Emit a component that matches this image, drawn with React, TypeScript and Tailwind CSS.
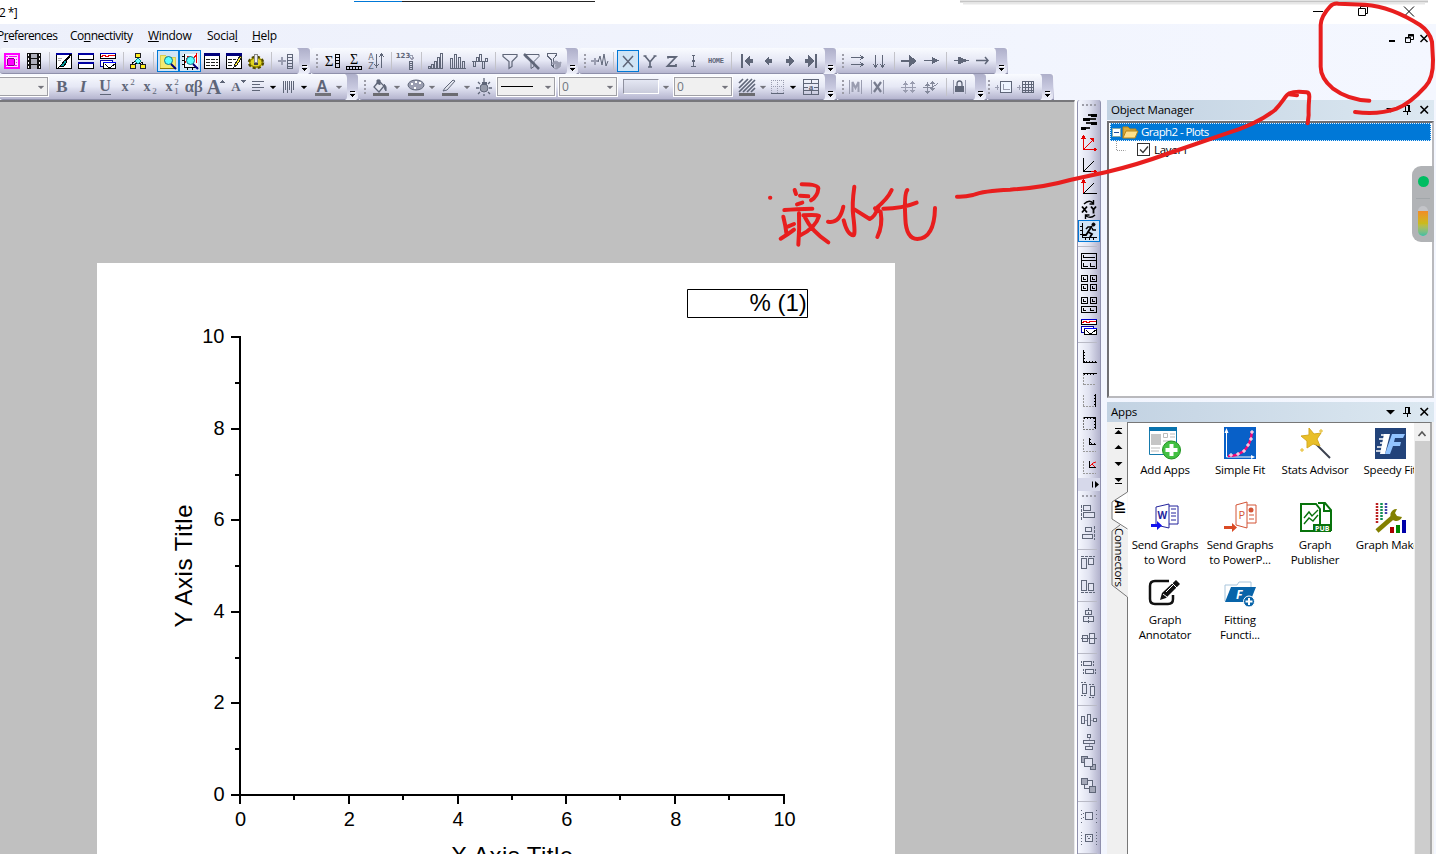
import React from "react";

type Kids = { children?: React.ReactNode };
const G = "#5f6678";
const L = "#9a9db0";
const serif = "Liberation Serif";

function Ic({ children, on, w = 22 }: Kids & { on?: boolean; w?: number }) {
  return (
    <div className={on ? "h-[22px] shrink-0 bg-[#cfe4f5] outline outline-1 -outline-offset-1 outline-[#0078d7]" : "h-[22px] shrink-0"}>
      <svg className="block" width={w} height="22" viewBox={`0 0 ${w} 22`} fill="none" stroke={G} shapeRendering="crispEdges">
        {children}
      </svg>
    </div>
  );
}
const Sep = () => (
  <div className="flex h-[18px] w-2 shrink-0 justify-center">
    <div className="w-px bg-[#c3c3c9]" />
  </div>
);
const HSep = () => (
  <div className="flex h-2 w-[22px] shrink-0 items-center">
    <div className="h-px w-[19px] bg-[#b9bac6]" />
  </div>
);
const Grip = () => (
  <div className="flex w-[10px] shrink-0 flex-col items-center gap-[2px] pl-px">
    <i className="size-[2px] bg-[#9d9da8]" />
    <i className="size-[2px] bg-[#9d9da8]" />
    <i className="size-[2px] bg-[#9d9da8]" />
    <i className="size-[2px] bg-[#9d9da8]" />
  </div>
);
const HGrip = () => (
  <div className="flex h-[10px] shrink-0 items-center justify-center gap-[2px]">
    <i className="size-[2px] bg-[#9d9da8]" />
    <i className="size-[2px] bg-[#9d9da8]" />
    <i className="size-[2px] bg-[#9d9da8]" />
    <i className="size-[2px] bg-[#9d9da8]" />
  </div>
);
const More = () => (
  <svg className="block shrink-0" width="14" height="26" viewBox="0 0 14 26">
    <defs>
      <linearGradient id="more" x1="0" y1="0" x2="0" y2="1">
        <stop offset="0" stopColor="#aeafca" />
        <stop offset=".55" stopColor="#c9cae0" />
        <stop offset="1" stopColor="#f0f2fc" />
      </linearGradient>
    </defs>
    <path d="M0 0h10q3 0 3 3v20q0 2-2 3H0q2-1 2-3V4q0-3-2-4z" fill="url(#more)" />
    <g shapeRendering="crispEdges">
      <path d="M6 18.500h5" stroke="#fff" />
      <path d="M5 17.500h5" stroke="#000" />
      <path d="M4.500 20h6l-3 3z" fill="#000" />
    </g>
    <path d="M8 23.500l3-3" stroke="#fff" fill="none" />
  </svg>
);
const Dd = ({ dark, w = 12 }: { dark?: boolean; w?: number }) => (
  <svg className="block shrink-0" width={w} height="22" viewBox={`0 0 ${w} 22`}>
    <path d={`M${Math.floor(w / 2) - 3} 10h6l-3 3z`} fill={dark ? "#000" : "#75757d"} stroke={dark ? "#000" : "#75757d"} strokeWidth=".2" />
  </svg>
);
const Bar = ({ children }: Kids) => (
  <div className="flex h-[26px] shrink-0 items-center rounded-l-[3px] border-b border-[#8f90ab] bg-gradient-to-b from-[#f9fbff] via-[#e6e8f5] to-[#b5b5cf]">
    {children}
  </div>
);
const Combo = ({ children }: Kids) => (
  <div className="flex h-[19px] w-[58px] shrink-0 items-center border border-[#a0a0a6] bg-[#f0f0f0] pl-[2px] font-['Open_Sans',sans-serif] text-[12px] text-[#707680] shadow-[0_0_0_1px_#fff]">
    <div className="w-[42px]">{children}</div>
    <Dd w={12} />
  </div>
);

const Mag = () => (
  <>
    <circle cx="11.500" cy="10.500" r="4" fill="#5ff" stroke="#178" shapeRendering="auto" />
    <path d="M14 14l5 5" stroke="#00007c" strokeWidth="2" shapeRendering="auto" />
  </>
);
const Win = ({ x, y, w, h }: { x: number; y: number; w: number; h: number }) => (
  <>
    <rect x={x + 0.5} y={y + 0.5} width={w - 1} height={h - 1} fill="#fff" stroke="#000" />
    <path d={`M${x} ${y + 1}h${w}`} stroke="#0000a0" strokeWidth="2" />
  </>
);
const WaveWin = () => (
  <>
    <rect x="3.500" y="3.500" width="15" height="5" fill="#fff" stroke="#000" />
    <path d="M3 3.500h16" stroke="#00c" />
    <path d="M4 7l3-2 3 2 3-2 2 1 3-1" stroke="#e00" />
    <rect x="3.500" y="10.500" width="12" height="6" fill="#fff" stroke="#00a" />
    <rect x="6.500" y="12.500" width="12" height="6" fill="#fff" stroke="#000" />
    <path d="M6 12.500h13" stroke="#00f" />
    <path d="M8 14l3 3h3l4-3" stroke="#000" />
  </>
);
const Plain = ({ t, x = 11, y = 16, s = 17, c = G, b = true, i = false, f = serif }: { t: string; x?: number; y?: number; s?: number; c?: string; b?: boolean; i?: boolean; f?: string }) => (
  <text x={x} y={y} fontSize={s} fill={c} stroke="none" textAnchor="middle" fontWeight={b ? 700 : 400} fontStyle={i ? "italic" : "normal"} fontFamily={f}>
    {t}
  </text>
);

function RowOne() {
  return (
    <div className="flex h-[26px] shrink-0">
      <Bar>
        <div className="w-px" />
        <Ic>
          <rect x="4" y="4" width="14" height="14" fill="#ffd8ff" stroke="#f0f" strokeWidth="2" />
          <path d="M5 6.500h2M8 6.500h8M15.500 9v1M15.500 12v1M5 15.500h11" stroke="#f0f" />
          <circle cx="10" cy="12" r="4" fill="#f0f" stroke="#808" />
        </Ic>
        <Ic>
          <path d="M4 3h14v16H4z" fill="#111" stroke="none" />
          <path d="M8 4h6v4H8zM8 9h6v5H8zM8 15h6v4H8z" fill="#aeb0bb" stroke="none" />
          <path d="M5.500 4v15M16.500 4v15" stroke="#fff" strokeDasharray="2 2" />
        </Ic>
        <Sep />
        <Ic>
          <Win x={3} y={3} w={16} h={16} />
          <path d="M18 4l-7 9" stroke="#000" strokeWidth="2" />
          <path d="M12 10l-3 4-3 3 5-1 3-4z" fill="#099" stroke="#000" />
          <path d="M5 8h4M5 10h3" stroke="#aaa" />
        </Ic>
        <Ic>
          <Win x={3} y={3} w={16} h={7} />
          <Win x={3} y={12} w={16} h={7} />
        </Ic>
        <Ic><WaveWin /></Ic>
        <Sep />
        <Ic>
          <path d="M11 7v3M5.500 16v-3l5-3 5 3v3M8 10l6 4M14 10l-6 4" stroke="#000" />
          <path d="M11 8l3 3-3 3-3-3z" fill="#6ff" stroke="#088" />
          <path d="M8.500 3.500h5v4h-5zM3.500 14.500h5v4h-5zM13.500 14.500h5v4h-5z" fill="#ffee20" stroke="#222" />
        </Ic>
        <Sep />
        <Ic on>
          <path d="M3 5h5l2 2h8v11H3z" fill="#f4ea70" stroke="#d8cc50" />
          <path d="M3 18.500h15" stroke="#8b7a00" /><Mag />
        </Ic>
        <Ic on>
          <path d="M4 4h15v14H4z" fill="#f4f8ff" stroke="none" />
          <path d="M5.500 4v13.500h13M3 6.500h2M3 10.500h2M3 14.500h2M8.500 18v2M13.500 18v2" stroke="#000" />
          <path d="M6 13l3-7h2l2 5 4-6v8" stroke="#e00" /><Mag />
        </Ic>
        <Ic>
          <rect x="3.500" y="3.500" width="15" height="15" fill="#fff" stroke="#000" /><path d="M3 4.500h16" stroke="#00007c" strokeWidth="3" />
          <path d="M5 9.500h12M5 12.500h12M5 15.500h12" stroke="#222" strokeDasharray="4 1" />
        </Ic>
        <Ic>
          <rect x="3.500" y="3.500" width="15" height="15" fill="#fff" stroke="#000" /><path d="M3 4.500h16" stroke="#00007c" strokeWidth="3" />
          <path d="M5 9.500h8M5 12.500h5M5 15.500h5" stroke="#222" strokeDasharray="4 1" />
          <path d="M17 6l-5 8-1 3 3-2 5-8z" fill="#fe3" stroke="#222" />
        </Ic>
        <Ic>
          <g shapeRendering="auto">
            <ellipse cx="11" cy="12.500" rx="7" ry="5.500" fill="#d7c800" stroke="#4f4700" strokeWidth="2.500" strokeDasharray="3 2" />
            <ellipse cx="11" cy="12.500" rx="6" ry="4.500" fill="#e0d420" stroke="#7a7000" />
          </g>
          <path d="M9.500 4.500h3v8h-3z" fill="#eee" stroke="#888" /><path d="M9 14h4" stroke="#444" strokeWidth="2" />
        </Ic>
        <Sep />
        <Ic>
          <path d="M7 7v8M3 11h8" stroke={L} strokeWidth="2" />
          <path d="M12.500 4.500h5v14h-5zM13 7.500h5M13 10.500h5M13 13.500h5M13 16.500h5" />
        </Ic>
        <More />
      </Bar>
      <Bar>
        <Grip />
        <Ic><Plain t="Σ" x={8} y={16} s={15} c="#000" b={false} /><path d="M14.500 4.500h4v13h-4zM14 7.500h4M14 10.500h4M14 13.500h4" stroke="#000" /></Ic>
        <Ic>
          <Plain t="Σ" y={14} s={14} c="#000" b={false} /><path d="M3 16.500h16M3 19.500h16M3.500 16v4M6.500 17v3M9.500 17v3M12.500 17v3M15.500 17v3M18.500 16v4" stroke="#000" />
        </Ic>
        <Ic>
          <Plain t="A" x={6} y={10} s={8} b={false} f="DejaVu Sans" /><Plain t="Z" x={6} y={19} s={8} b={false} f="DejaVu Sans" />
          <path d="M11.500 4v13M9.500 14l2 3 2-3M16.500 18V4M14 7l2.500-3L19 7" />
        </Ic>
        <Sep />
        <Ic>
          <Plain t="123" x={8} y={8} s={7} f="DejaVu Sans" /><path d="M14 5.500h3v4M15 7l2 3 2-3" stroke={L} />
          <path d="M14.500 11.500h3v8h-3zM14 13.500h4M14 15.500h4M14 17.500h4" />
        </Ic>
        <Sep />
        <Ic><path d="M3 18.500h15M3.500 18v-2h2v2M6.500 18v-4h2v4M9.500 18v-7h2v7M12.500 18V7.500h2V18M15.500 18V3.500h2V18" /></Ic>
        <Ic><path d="M3 18.500h16M3.500 18V8.500h2V18M7.500 18V4.500h2V18M11.500 18V7.500h2V18M15.500 18v-7h2v7" /></Ic>
        <Ic><path d="M3 11.500h16M4.500 11v5h2v-5M7.500 11V7h2v4M10.500 11V4.500h2V11M13.500 11v7h2v-7M16.500 11V8h2v3" /></Ic>
        <Sep />
        <Ic><path d="M4 4.500h14v2l-5 5v5l-3 2v-7L4 6.500z" shapeRendering="auto" strokeWidth="1.200" /></Ic>
        <Ic><path d="M4 4.500h14v2l-5 5v5l-3 2v-7L4 6.500z" shapeRendering="auto" /><path d="M3 4l15 15" strokeWidth="2.500" shapeRendering="auto" /></Ic>
        <Ic><path d="M4 3.500h9v2l-3 4v7l-2-2v-5l-4-4z" /><path d="M9 14c1-3 5-4 7-1l2-1-1 5-5-1 2-1M17 16c-2 4-5 3-6 2" stroke={L} fill={L} shapeRendering="auto" /></Ic>
        <More />
      </Bar>
      <Bar>
        <Grip />
        <Ic w={20}><path d="M6 8v7M2 11h8" stroke={L} strokeWidth="2" /><path d="M9 12l2-6 2 9 2-11 2 12 2-5" shapeRendering="auto" /></Ic>
        <Sep />
        <Ic on><path d="M6 6l10 11M16 6L6 17" shapeRendering="auto" strokeWidth="1.500" /></Ic>
        <Ic><path d="M6 6l5 6 5-6M11 12v5M4.500 6h3M14.500 6h3M9 17h4" strokeWidth="1.700" shapeRendering="auto" /></Ic>
        <Ic><path d="M7 8.500V7h8l-8.500 9H15v-2" strokeWidth="1.800" shapeRendering="auto" /></Ic>
        <Ic><path d="M10.500 5v12M9 5.500h3M8 16.500h5M9 11.500h3M9 10.500h3" /></Ic>
        <Ic><text x="3" y="13" fontSize="7" fontWeight="700" fontFamily="Liberation Mono" fill={G} stroke="none" textLength="16">HOME</text></Ic>
        <Sep />
        <Ic><path d="M7 4v14" strokeWidth="2" /><path d="M9 11l6-6v4h3v4h-3v4z" fill={G} stroke="none" /></Ic>
        <Ic><path d="M7 11l5-5v3h3v4h-3v3z" fill={G} stroke="none" /></Ic>
        <Ic><path d="M15 11l-5-5v3H7v4h3v3z" fill={G} stroke="none" /></Ic>
        <Ic><path d="M15 4v14" strokeWidth="2" /><path d="M13 11L7 5v4H4v4h3v4z" fill={G} stroke="none" /></Ic>
        <More />
      </Bar>
      <Bar>
        <Grip />
        <Ic w={21}><path d="M4 7.500h12M4 14.500h12M13 5l3 2.500-3 2.500M13 12l3 2.500-3 2.500" /></Ic>
        <Ic><path d="M7.500 5v12M14.500 5v12M5 14l2.500 3 2.500-3M12 14l2.500 3 2.500-3" /></Ic>
        <Sep />
        <Ic><path d="M3 11h9" strokeWidth="2" /><path d="M11 5l8 6-8 6z" fill={G} stroke="none" /></Ic>
        <Ic><path d="M4 10.500h10" /><path d="M12 7l7 3.500-7 3.500z" fill={G} stroke="none" /></Ic>
        <Sep />
        <Ic><path d="M4 10.500h15" /><path d="M8 6.500l10 4L8 14.500z" fill={G} stroke="none" /></Ic>
        <Ic><path d="M4 10.500h12M13 7l3 3.500-3 3.500" strokeWidth="1.500" shapeRendering="auto" /></Ic>
        <More />
      </Bar>
    </div>
  );
}

function RowTwo() {
  return (
    <div className="flex h-[26px] shrink-0">
      <Bar>
        <div className="-ml-[10px] mr-[3px]"><Combo /></div>
        <Ic><Plain t="B" /></Ic>
        <Ic><Plain t="I" x={10} i /></Ic>
        <Ic><Plain t="U" x={10} y={15} s={16} /><path d="M5 18.500h11" /></Ic>
        <Ic><Plain t="x" x={8} y={15} s={14} /><Plain t="2" x={15.500} y={9} s={9} b={false} /></Ic>
        <Ic><Plain t="x" x={8} y={15} s={14} /><Plain t="2" x={15.500} y={18} s={9} b={false} /></Ic>
        <Ic><Plain t="x" x={8} y={15} s={14} /><Plain t="2" x={15.500} y={9} s={9} b={false} /><Plain t="1" x={15.500} y={18} s={9} b={false} /></Ic>
        <Ic><Plain t="αβ" x={10.500} s={17} b={false} /><Plain t="αβ" x={11} s={17} b={false} /></Ic>
        <Ic><Plain t="A" x={9} y={18} s={20} /><path d="M15 7h5l-2.500-3z" fill={G} stroke="none" /></Ic>
        <Ic><Plain t="A" x={9} y={15} s={13} /><path d="M14 4h5l-2.500 3z" fill={G} stroke="none" /></Ic>
        <Ic w={18}><path d="M3 5.500h12M3 8.500h8M3 11.500h12M3 14.500h8" /></Ic>
        <Dd dark />
        <Ic w={19}><path d="M4.500 5v12M6.500 5v9M8.500 5v12M10.500 5v9M12.500 5v12M14.500 5v9" /></Ic>
        <Dd dark />
        <Ic w={23}><Plain t="A" x={12} y={16} s={16} f="Liberation Sans" /><path d="M5 17h16v3H5z" fill="#727278" stroke="none" /></Ic>
        <Dd />
        <More />
      </Bar>
      <Bar>
        <Grip />
        <Ic w={22}>
          <path d="M9 4l6 6-5 6-5-5 5-6" fill="#e4e6f0" strokeWidth="1.300" shapeRendering="auto" /><path d="M8 8V4h3v5M15 8q3 2 2 7-2-2-2-5" fill={G} shapeRendering="auto" />
          <path d="M4 17h16v3H4z" fill="#6b6b70" stroke="none" />
        </Ic>
        <Dd />
        <Ic w={24}><ellipse cx="13" cy="9" rx="8" ry="5" fill={L} shapeRendering="auto" /><path d="M8 8h2M12 6h2M16 7h2M11 12h2" stroke="#fff" strokeWidth="2" /><path d="M5 17h16v3H5z" fill="#6b6b70" stroke="none" /></Ic>
        <Dd w={11} />
        <Ic w={24}><path d="M5 15l2-3 8-8 2 1-8 9z" fill="#e4e6f0" shapeRendering="auto" /><path d="M4 17h16v3H4z" fill="#6b6b70" stroke="none" /></Ic>
        <Dd w={11} />
        <Ic w={22}><path d="M11 2v4M5 6l2 2M17 6l-2 2M3 12h3M16 12h3M5 18l2-2M17 18l-2-2M11 18v2" strokeWidth="1.300" shapeRendering="auto" /><circle cx="11" cy="12" r="4" fill="#969baa" shapeRendering="auto" /><path d="M9 6h4v2H9z" fill={G} /></Ic>
        <div className="w-[2px]" />
        <Combo><div className="ml-px h-px w-8 bg-black" /></Combo>
        <div className="w-1" />
        <Combo>0</Combo>
        <div className="w-[6px]" />
        <div className="h-[15px] w-9 border border-[#8f919f] border-r-white border-b-white bg-gradient-to-b from-[#e4e7f3] to-[#c9cbdb]" />
        <Dd w={15} />
        <Combo>0</Combo>
        <div className="w-1" />
        <Ic w={22}><path d="M3 7l4-4M3 12l9-9M3 16L16 3M7 16L19 4M11 16l8-8M15 16l4-4" strokeWidth="1.700" shapeRendering="auto" /><path d="M3 17h16v3H3z" fill="#6b6b70" stroke="none" /></Ic>
        <Dd w={10} />
        <Ic w={19}><path d="M3 4.500h13M3 10.500h13M3.500 4v13M9.500 4v13M15.500 4v13" stroke={L} strokeDasharray="1 1" /><path d="M3 17.500h13" /></Ic>
        <Dd dark />
        <Ic w={24}><path d="M4.500 3.500h15v15h-15zM4 7.500h16M4 14.500h16M12 3v5M12 14v5" /><Plain t="a" x={12} y={14} s={9} /><path d="M5 11.500h4M15 11.500h4" /></Ic>
        <More />
      </Bar>
      <Bar>
        <Grip />
        <Ic><path d="M2.500 4v14M14.500 4v14" stroke={L} /><path d="M5.500 16V6l3 6 3-6v10" strokeWidth="2" stroke={L} shapeRendering="auto" /></Ic>
        <Ic><path d="M2.500 4v14M14.500 4v14" stroke={L} /><path d="M5 6l7 10M12 6L5 16" strokeWidth="2.200" shapeRendering="auto" stroke="#777c8e" /></Ic>
        <div className="w-[7px]" />
        <Ic><path d="M7.500 5v12M3 11.500h15M14.500 5v12" stroke={L} /><path d="M5 9l2.500-3L10 9zM5 14l2.500 3 2.500-3zM12 8l2.500-3L17 8zM12 14l2.500 3 2.500-3z" fill={L} stroke="none" /></Ic>
        <Ic><path d="M7.500 6v12M3 11.500h9l6-4M12.500 5v9" stroke="#858a9c" /><path d="M5 10l2.500-3 2.500 3zM5 15l2.500 3 2.500-3zM10 8l2.500-3L15 8zM10 12l2.500 3 2.500-3z" fill="#858a9c" stroke="none" /></Ic>
        <Sep />
        <Ic w={23}><path d="M3.500 4v14M15.500 4v14" stroke={L} /><path d="M7 11V8q0-3 2.500-3T12 8v3" shapeRendering="auto" strokeWidth="1.300" /><rect x="5.500" y="10.500" width="8" height="5" fill={G} /></Ic>
        <More />
      </Bar>
      <Bar>
        <div className="-ml-1"><Grip /></div>
        <Ic><path d="M2 11.500h4M4 9v5" stroke={L} /><path d="M7.500 5.500h11v11h-11z" fill="#eef4ff" strokeWidth="1.200" /><path d="M10.500 8v5.500h6" stroke={L} /></Ic>
        <Ic w={25}><path d="M2 11.500h4M4 9v5" stroke={L} /><path d="M7.500 5.500h11v11h-11zM7 8.500h12M7 11.500h12M7 14.500h12M10.500 5v12M13.500 5v12M16.500 5v12" /></Ic>
        <More />
      </Bar>
    </div>
  );
}

const Mini = ({ x, y, w = 7 }: { x: number; y: number; w?: number }) => (
  <>
    <path d={`M${x + 0.5} ${y + 0.5}h${w - 1}v6h-${w - 1}z`} stroke="#000" />
    <path d={`M${x + 2.5} ${y + 2}v2.500h2.500`} stroke="#000" />
  </>
);
const Box = ({ d }: { d: string }) => <path d={d} fill="#e3e5f2" />;

function SideTools() {
  return (
    <div className="flex h-[754px] w-6 shrink-0 flex-col items-center overflow-hidden rounded-t-[3px] border-r border-l border-[#8f90ad] bg-gradient-to-r from-[#f6f8ff] via-[#e0e2f0] to-[#b2b2cc]">
      <HGrip />
      <Ic><path d="M13 5h6M5 9h7M13 13h6M3 18h5" stroke="#000" strokeWidth="3" /><path d="M10 5h3M12 9h6M8 13h5M8 18h4" stroke="#222" strokeWidth="2" /></Ic>
      <Ic><g stroke="#e60000" fill="none"><path d="M5.500 4v13.500H18M6 17l9-9" /><path d="M3 6.500h5l-2.500-4zM15.500 15v5l4-2.500zM11 6h5v5z" fill="#e60000" stroke="none" /></g></Ic>
      <Ic><path d="M5.500 4v13.500H15M6 17L16 7" stroke="#000" /><path d="M13 17.500h3" stroke="#e60000" /><path d="M15.500 15v5l4-2.500z" fill="#e60000" stroke="none" /></Ic>
      <Ic><path d="M6 17L16 7M5 17.500h14" stroke="#000" /><path d="M5.500 5v12" stroke="#e60000" /><path d="M3 6.500h5l-2.500-4z" fill="#e60000" stroke="none" /></Ic>
      <Ic><g shapeRendering="auto" stroke="#000"><path d="M4 8.500l5 6M9 8.500l-5 6M13 8.500l2.500 3 2.500-3M15.500 11.500v4" strokeWidth="1.800" /><path d="M6 6q5-5 9-1M15.500 2v4h-4M17 17q-4 4-9 1M7.500 21v-4h4" strokeWidth="1.400" /></g></Ic>
      <Ic on>
        <path d="M4.500 3v14.500H19M2 6h2M2 10h2M2 14h2M7 18v2M11 18v2M15 18v2" stroke="#000" />
        <g shapeRendering="auto" stroke="#000"><path d="M14 6l-4 6 4 2-2 3M10 12l-2 3H5" strokeWidth="1.800" /><path d="M14 7H10L8 9M14 8l1 2h3" strokeWidth="1.500" /><circle cx="15.500" cy="4.500" r="1.500" fill="#000" /></g>
      </Ic>
      <HSep />
      <Ic><path d="M3.500 3.500h15v15h-15zM3 10.500h16M5.500 5v2.500h11M5.500 13v3.500h4M12.500 13v3.500h4" stroke="#000" /></Ic>
      <Ic><Mini x={3} y={3} /><Mini x={12} y={3} /><Mini x={3} y={12} /><Mini x={12} y={12} /></Ic>
      <Ic><Mini x={3} y={3} /><Mini x={12} y={3} /><Mini x={3} y={12} w={16} /><path d="M12.500 14v2.500h3" stroke="#000" /></Ic>
      <Ic><WaveWin /></Ic>
      <HSep />
      <Ic><path d="M5.500 4v12.500h13" stroke="#000" /><path d="M6.500 6v10M8 15.500h11" stroke="#000" strokeDasharray="1 2" /></Ic>
      <Ic><path d="M5.500 6v11M6 16.500h12" stroke="#999" strokeDasharray="2 1" /><path d="M5 5.500h14" stroke="#000" /><path d="M6 6.500h12" stroke="#000" strokeDasharray="1 2" /></Ic>
      <Ic><path d="M5.500 5v11M5 16.500h12" stroke="#999" strokeDasharray="2 1" /><path d="M17.500 4v13" stroke="#000" /><path d="M16.500 5v12" stroke="#000" strokeDasharray="1 2" /></Ic>
      <Ic><path d="M5 5.500h13M17.500 5v12" stroke="#000" /><path d="M6 6.500h12M16.500 6v11" stroke="#000" strokeDasharray="1 2" /><path d="M5.500 5v12M5 17.500h12" stroke="#777" strokeDasharray="2 1" /></Ic>
      <Ic><path d="M5.500 5v12M5 17.500h13" stroke="#999" strokeDasharray="2 1" /><path d="M11.500 4v6.500H18" stroke="#000" /><path d="M12.500 5v6M13 9.500h5" stroke="#000" strokeDasharray="1 2" /></Ic>
      <Ic><path d="M5.500 5v12M5 17.500h13" stroke="#999" strokeDasharray="2 1" /><path d="M11.500 5v6.500H18" stroke="#000" /><path d="M12 10l3-3 3-1M14 8l3 3" stroke="#e00" shapeRendering="auto" /></Ic>
      <svg className="block shrink-0" width="24" height="13" viewBox="0 0 24 13"><path d="M0 0h24v13H0z" fill="#d6d8ea" /><path d="M15.500 3.500v6" stroke="#000" /><path d="M18 3l4 3.500-4 3.500z" fill="#000" /></svg>
      <HGrip />
      <Ic><path d="M3.500 4v15" strokeDasharray="3 1" /><Box d="M5.500 4.500h7v5h-7zM5.500 11.500h11v5h-11z" /></Ic>
      <Ic><path d="M16.500 3v14" strokeDasharray="3 1" /><Box d="M7.500 4.500h6v4h-6zM4.500 11.500h10v4h-10z" /></Ic>
      <HSep />
      <Ic><path d="M3 3.500h14" strokeDasharray="3 1" /><Box d="M3.500 5.500h5v10h-5zM10.500 5.500h5v6h-5z" /></Ic>
      <Ic><path d="M3 17.500h14" strokeDasharray="3 1" /><Box d="M3.500 5.500h5v10h-5zM10.500 8.500h5v7h-5z" /></Ic>
      <HSep />
      <Ic><Box d="M7.500 5.500h6v4h-6zM5.500 11.500h10v5h-10z" /><path d="M10.500 3v16" strokeDasharray="3 1" /></Ic>
      <Ic><Box d="M4.500 8.500h5v6h-5zM11.500 6.500h5v10h-5z" /><path d="M3 11.500h16" /></Ic>
      <HSep />
      <Ic><path d="M3.500 4v6M15.500 4v6M5.500 12v6M17.500 12v6" strokeDasharray="2 1" /><Box d="M5.500 4.500h8v4h-8zM7.500 12.500h8v4h-8z" /></Ic>
      <Ic><path d="M3 3.500h6M3 16.500h6M11 5.500h6M11 18.500h6" strokeDasharray="2 1" /><Box d="M4.500 5.500h4v9h-4zM12.500 7.500h4v9h-4z" /></Ic>
      <HSep />
      <Ic><path d="M3 11.500h15" stroke={L} /><Box d="M3.500 7.500h3v7h-3zM9.500 5.500h3v11h-3zM15.500 9.500h3v3h-3z" /></Ic>
      <Ic><path d="M11 3v16" stroke={L} /><Box d="M9.500 3.500h3v3h-3zM5.500 9.500h11v3h-11zM7.500 15.500h7v3h-7z" /></Ic>
      <Ic><path d="M3.500 3.500h6v6h-6zM12.500 11.500h5v5h-5z" fill="#a4a8b8" /><Box d="M6.500 5.500h8v8h-8z" /></Ic>
      <Ic><Box d="M6.500 5.500h8v8h-8z" /><path d="M3.500 3.500h6v6h-6zM11.500 11.500h6v6h-6z" fill="#a4a8b8" /></Ic>
      <HSep />
      <Ic><Box d="M7.500 7.500h7v7h-7z" /><path d="M3.500 5v13M18.500 5v13M5.500 8v8" strokeDasharray="1 3" /></Ic>
      <Ic><Box d="M7.500 7.500h7v7h-7z" /><path d="M3.500 5v13M18.500 5v13M9 9l4 4M13 9l-4 4" strokeDasharray="1 2" /></Ic>
      <HSep />
    </div>
  );
}

function Graph() {
  const n = [0, 1, 2, 3, 4, 5];
  const minor = [0, 1, 2, 3, 4];
  return (
    <div className="mt-[161px] ml-[97px] h-[591px] w-[798px] bg-white">
      <svg className="block overflow-hidden" width="798" height="591" viewBox="97 263 798 591" fontFamily="Liberation Sans" fontSize="20">
        <g stroke="#000" strokeWidth="2" shapeRendering="crispEdges">
          <path d="M240 336v468M231 795h554" />
          {n.map((i) => <path key={i} d={`M231 ${Math.round(337 + i * 91.6)}h9M${Math.round(240 + i * 108.8)} 795v9`} />)}
          {minor.map((i) => <path key={i} d={`M235 ${Math.round(383 + i * 91.6)}h5M${Math.round(294 + i * 108.8)} 795v5`} />)}
        </g>
        {n.map((i) => <text key={i} x="224.500" y={343 + i * 91.6} textAnchor="end">{10 - 2 * i}</text>)}
        {n.map((i) => <text key={i} x={240.500 + i * 108.8} y="826" textAnchor="middle">{2 * i}</text>)}
        <text transform="translate(192 627.500) rotate(-90)" fontSize="24" textLength="123">Y Axis Title</text>
        <text x="451" y="864" fontSize="24" textLength="122">X Axis Title</text>
        <path d="M687.500 289.500h120v28h-120z" fill="none" stroke="#000" />
        <text x="749.500" y="311" fontSize="24">% (1)</text>
      </svg>
    </div>
  );
}

const PanelHead = ({ title }: { title: string }) => (
  <div className="flex h-5 shrink-0 items-center justify-between bg-gradient-to-r from-[#c2d2e2] to-[#dce8f1] pl-1">
    <span className="tracking-[-0.2px]">{title}</span>
    <svg width="52" height="20" viewBox="0 0 52 20" stroke="#000" fill="none">
      <path d="M4 8h9l-4.500 4.500z" fill="#000" stroke="none" />
      <path d="M23.500 11V5.500h4V11M21 11.500h8M25.500 12v3M26.500 6v5" shapeRendering="crispEdges" />
      <path d="M38.500 6l7.500 7.500M46 6l-7.500 7.500" strokeWidth="1.600" />
    </svg>
  </div>
);

const App1 = ({ label, children }: Kids & { label: string[] }) => (
  <div className="flex h-[75px] w-[75px] shrink-0 flex-col items-center">
    <svg className="-ml-px block shrink-0" width="34" height="36" viewBox="0 0 34 36" fill="none">{children}</svg>
    <div className="flex flex-col items-center pt-px pr-px leading-[15px] tracking-[-0.2px] whitespace-nowrap">
      {label.map((t) => <span key={t}>{t}</span>)}
    </div>
  </div>
);

function Panels() {
  return (
    <div className="flex h-[754px] w-[327px] shrink-0 flex-col text-[11.500px]">
      <PanelHead title="Object Manager" />
      <div className="mt-px h-[277px] shrink-0 border-2 border-[#6f6f73] border-r-[#b9b9bd] border-b-[#b9b9bd] bg-white">
        <div className="mx-px flex h-[18px] items-center border border-dotted border-[#e0f0ff] bg-[#0078d7] text-white">
          <svg className="-ml-px" width="30" height="16" viewBox="0 0 30 16" fill="none">
            <rect x="2.500" y="4.500" width="8" height="8" fill="#fff" stroke="#8aa" /><path d="M4 8.500h5" stroke="#224d9a" />
            <path d="M13 14V3h5l2 2h6v3" fill="#d9aa3b" stroke="#b98516" /><path d="M13 14l3-7h12l-3 7z" fill="#ffe08a" stroke="#b98516" />
          </svg>
          <span className="pb-px pl-px tracking-[-0.6px]">Graph2 - Plots</span>
        </div>
        <div className="flex h-[18px] items-center">
          <svg width="44" height="18" viewBox="0 0 44 18" fill="none">
            <path d="M7.500 0v9.500h9" stroke="#999" strokeDasharray="1 1" /><rect x="28.500" y="2.500" width="12" height="12" stroke="#333" /><path d="M31 8.500l3 3 5-6" stroke="#333" strokeWidth="1.300" />
          </svg>
          <span className="pb-px pl-px tracking-[-0.3px]">Layer1</span>
        </div>
      </div>
      <div className="mt-1 flex shrink-0 flex-col"><PanelHead title="Apps" /></div>
      <div className="flex h-[432px] shrink-0 bg-[#f0f0f0]">
        <div className="h-[432px] w-[21px] shrink-0">
          <svg className="block" width="21" height="432" viewBox="1107 422 21 432" fill="none">
            <path d="M1127.500 492l-15.500 10v17l8 6 8 6z" fill="#fff" stroke="none" />
            <path d="M1127.500 422v70l-15.500 10v17l15.500 10M1120 525l-8 6v54l15.500 12v257" stroke="#777" />
            <path d="M1115 428.500h7M1115 483.500h7" stroke="#000" />
            <path d="M1114.500 434l4-4 4 4zM1114.500 449l4-4 4 4zM1114.500 462h8l-4 4zM1114.500 478h8l-4 4z" fill="#000" />
            <text transform="translate(1114.500 500) rotate(90)" fontFamily="Open Sans" fontWeight="700" fontSize="11.500" fill="#000" textLength="14">All</text>
            <text transform="translate(1114.500 528) rotate(90)" fontFamily="Open Sans" fontSize="11.500" fill="#000" textLength="59">Connectors</text>
          </svg>
        </div>
        <div className="h-[432px] w-[286px] shrink-0 overflow-hidden border-t border-[#777] bg-white pt-[2px]">
          <div className="flex w-[300px] flex-wrap">
            <App1 label={["Add Apps"]}>
              <path d="M1.500 3.500h27v26h-27z" fill="#fff" stroke="#167aac" /><path d="M1 2h28v4H1z" fill="#0873ae" />
              <path d="M3 9h10v11H3z" fill="#c5c5c5" /><path d="M15.500 8.500h4v4h-4zM22 9h5M22 12h5M15 16h8M3 23h9M3 26h8" stroke="#bbb" />
              <circle cx="23.500" cy="25" r="9" fill="#43c043" stroke="#1f941f" /><path d="M23.500 19v12M17.500 25h12" stroke="#fff" strokeWidth="4" />
            </App1>
            <App1 label={["Simple Fit"]}>
              <path d="M1 2h32v32H1z" fill="#0860c8" /><path d="M3.500 5v27H30" stroke="#fff" /><path d="M1.500 8l2-5 2 5M28 30l4 2-4 2" fill="#fff" />
              <path d="M5 31Q27 31 29 6" stroke="#f00878" strokeWidth="2.500" /><path d="M8 28v4M6 30h4M15 27v4M13 29h4M21 24v4M19 26h4M25 18v4M23 20h4M28 12v4M26 14h4M29 5v4M27 7h4" stroke="#fff" />
            </App1>
            <App1 label={["Stats Advisor"]}>
              <path d="M17 18l15 15" stroke="#3c414f" strokeWidth="2" /><path d="M11 3l5 6 7-1-4 6 3 7-7-2-6 4 0-7-6-5 8-1z" fill="#e9bf28" stroke="#d5aa20" /><path d="M23 4v4M21 6h4M4 23v4M2 25h4" stroke="#e5b922" />
            </App1>
            <App1 label={["Speedy Fit"]}>
              <path d="M2 3h31v31H2z" fill="#22437a" /><path d="M19 9h13l-2 4h-8l-1 4h7l-1 4h-7l-3 8h-5z" fill="#92c4ff" />
              <path d="M11 9h6l-5 20H7z" fill="#fff" /><path d="M8 10h8M6 14h9M7 18h6M4 22h9M3 26h9" stroke="#fff" strokeWidth="1.500" />
            </App1>
            <App1 label={["Send Graphs", "to Word"]}>
              <path d="M8 7l13-3v24l-13-3zM21 6h9v18h-9M23 9h5M23 13h5M23 16h5M23 20h5" fill="#fff" stroke="#23239c" />
              <text x="9.500" y="19" fontSize="10" fontWeight="700" fill="#23239c" fontFamily="Open Sans">W</text><path d="M3 24h6v-3l5 4.500-5 4.500v-3H3z" fill="#11e" />
            </App1>
            <App1 label={["Send Graphs", "to PowerP..."]}>
              <path d="M13 5l11-3v26l-11-3zM24 5h9v18h-9M26 15h5M26 19h5" fill="#fff" stroke="#d35436" />
              <text x="15.500" y="19" fontSize="11" fill="#d35436" fontFamily="Open Sans">P</text><circle cx="28" cy="10" r="2.500" fill="#d35436" /><path d="M1 26h8v-3l5 4.500-5 4.500v-3H1z" fill="#da4a25" />
            </App1>
            <App1 label={["Graph", "Publisher"]}>
              <path d="M3 4h15l4 5v22H3zM20 3h7l6 7v20H23M26 4v7h7" fill="#fff" stroke="#08730c" strokeWidth="2" /><path d="M6 18l5-6 3 4 6-6M6 24l5-6 4 3 5-6" stroke="#08730c" strokeWidth="1.400" />
              <path d="M15 24h18v8H15z" fill="#08730c" /><text x="17" y="31" fontSize="7" fontWeight="700" fill="#fff" fontFamily="Open Sans">PUB</text>
            </App1>
            <App1 label={["Graph Maker"]}>
              <g strokeWidth="2.500" strokeDasharray="2 1"><path d="M4 3v20" stroke="#b22" /><path d="M8.500 3v18" stroke="#118d54" /><path d="M13 3v12" stroke="#44a" /></g>
              <path d="M4 31l16-14" stroke="#838000" strokeWidth="4.500" /><path d="M24 9a6 6 0 1 0 5 8l-5-1-2-3z" fill="#838000" />
              <path d="M17 27h4v6h-4z" fill="#a00" /><path d="M23 25h4v8h-4z" fill="#080" /><path d="M29 20h4v13h-4z" fill="#00a" />
            </App1>
            <App1 label={["Graph", "Annotator"]}>
              <path d="M21 6H7Q2 6 2 11v13q0 5 5 5h13q5 0 5-5v-4" stroke="#111" strokeWidth="2.500" /><path d="M28 5l4 4-14 14-6 2 2-7z" fill="#111" /><path d="M24 8l5 5M15 19l4 3M18 17l7-7" stroke="#fff" />
            </App1>
            <App1 label={["Fitting", "Functi..."]}>
              <path d="M2 26V10h12l2-3h12v6" fill="#fff" stroke="#a8c5dc" /><path d="M8 12h25l-6 15H2z" fill="#0864a9" />
              <text x="13" y="24" fontSize="12" fontStyle="italic" fontWeight="700" fill="#fff" fontFamily="Open Sans">F</text><circle cx="26" cy="26.500" r="5.500" fill="#0864a9" stroke="#fff" /><path d="M26 23v7M22.500 26.500h7" stroke="#fff" strokeWidth="2" />
            </App1>
          </div>
        </div>
        <div className="flex w-[18px] shrink-0 flex-col border-t border-r-2 border-t-[#777] border-r-[#aaa] pl-px">
          <svg className="block shrink-0" width="16" height="18" viewBox="0 0 16 18" fill="none"><path d="M3.500 13l3.500-4 3.500 4" stroke="#555" strokeWidth="1.600" /></svg>
          <div className="w-[15px] flex-1 bg-[#cdcdcd]" />
        </div>
      </div>
    </div>
  );
}

export default function App() {
  return (
    <div className="relative flex h-[854px] w-[1436px] flex-col overflow-hidden bg-gradient-to-r from-[#edf0fb] to-[#f4f7ff] font-['Open_Sans','Noto_Sans',sans-serif] text-[12px] text-black">
      <div className="flex h-6 shrink-0 justify-between bg-white">
        <span className="-ml-px pt-[4px] tracking-[-0.6px]">2 *]</span>
        <svg className="block" width="1082" height="24" viewBox="354 0 1082 24" fill="none" stroke="#000">
          <path d="M354 1.500h48" stroke="#0078d7" /><path d="M402 1.500h193" stroke="#222" />
          <path d="M960 1.500h468" stroke="#c5c5c5" strokeWidth="2" /><path d="M963 3.500h462" stroke="#e7e7e7" strokeWidth="2" />
          <path d="M1313 11.500h10M1358.500 8.500h7v7h-7zM1360.500 8V6.500h7v7H1366M1404 6.500l10 10M1414 6.500l-10 10" />
        </svg>
      </div>
      <div className="flex h-6 shrink-0 items-center justify-between">
        <div className="flex items-center tracking-[-0.3px] whitespace-nowrap">
          <span className="-ml-[3px] w-[73px] tracking-[-0.6px]">P<u>r</u>eferences</span>
          <span className="w-[78px] tracking-[-0.5px]">Co<u>n</u>nectivity</span>
          <span className="w-[59px]"><u>W</u>indow</span>
          <span className="w-[45px]">Socia<u>l</u></span>
          <span><u>H</u>elp</span>
        </div>
        <svg className="block" width="50" height="24" viewBox="1386 24 50 24" fill="none" stroke="#000">
          <path d="M1389 41h6M1408 35.500h6" strokeWidth="2" /><path d="M1405.500 37.500h5v5h-5zM1408.500 37v-2.500h5v5H1411M1405 38h6" /><path d="M1420.500 35l7 7M1427.500 35l-7 7" strokeWidth="1.500" />
        </svg>
      </div>
      <RowOne />
      <RowTwo />
      <div className="flex h-[754px] shrink-0">
        <div className="w-[1075px] shrink-0 border-t-2 border-r border-t-[#77777b] border-r-[#e8e8ec] bg-[#c0c0c0]"><Graph /></div>
        <div className="w-[2px] shrink-0 bg-white" />
        <SideTools />
        <div className="w-[6px] shrink-0" />
        <Panels />
      </div>
      <div className="absolute top-[166px] left-[1412px] flex h-[76px] w-[22px] flex-col items-center rounded-l-[9px] bg-[#b1b3b6] pt-[10px]">
        <div className="size-[11px] rounded-full bg-[#00bd62]" />
        <div className="mt-[11px] h-px w-[14px] bg-[#a1a6a9]" />
        <div className="mt-[7px] h-[30px] w-[10px] overflow-hidden rounded-full bg-[#c3c4c8] pt-[5px]">
          <div className="h-[25px] bg-gradient-to-b from-[#f18b27] via-[#c9bb1d] to-[#35bea4]" />
        </div>
      </div>
      <svg className="pointer-events-none absolute inset-0" width="1436" height="854" viewBox="0 0 1436 854" fill="none" stroke="#e81e1e" strokeLinecap="round" strokeLinejoin="round">
        <g transform="translate(1070 0) scale(.33333)" strokeWidth="12">
          <path d="M898 302Q835 300 788 265Q752 234 752 200V75Q753 49 780 20Q790 9 805 11L885 14Q965 20 1050 75Q1078 94 1086 125L1089 180Q1090 235 1066 260Q1020 311 980 326Q925 345 855 336" />
          <path d="M-339 590Q-315 591-291 585Q-260 572-180 569Q-80 563 0 540L110 516Q200 495 290 462L470 400Q560 373 615 330C640 304 646 286 658 280Q675 273 710 277Q718 278 718 290Q715 325 716 345L713 370M658 283l23 3" />
        </g>
        <g transform="translate(740 170) scale(.33333)" strokeWidth="12">
          <path d="M90 83h1M164 60l4 12M185 43q48 0 50 12q-2 24-22 36M180 77l25 2M171 103l16-5M133 120q35-3 84-4M130 140q7 28 10 55M145 169l17-7M122 206q25-15 40-27M177 130q2 45-2 94M190 136q40-3 47 2q-10 35-56 58M195 142q20 42 70 75" />
          <path d="M264 155q35 7 46-45M343 50q-8 55-3 90q7 57 0 56q-18-1-29-45M343 118l46 29q15-5 27-37M455 60q-12 27-49 57M405 115l17 11q7 40-10 75M430 116q57 0 100-18M502 60q-10 10-6 85q2 61 36 62q51-2 53-93" />
        </g>
      </svg>
    </div>
  );
}
